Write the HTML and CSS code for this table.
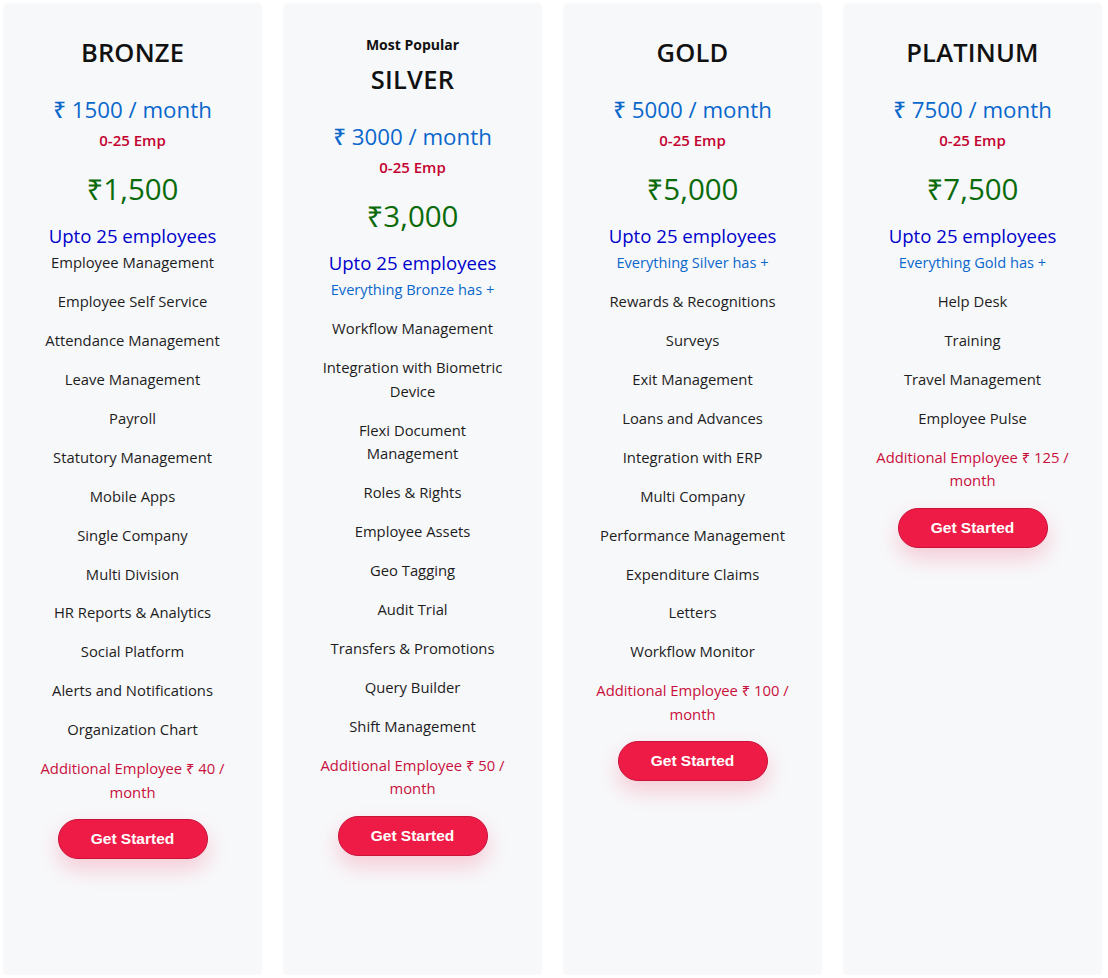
FILE: index.html
```html
<!DOCTYPE html>
<html lang="en">
<head>
<meta charset="utf-8">
<title>Pricing</title>
<link rel="stylesheet" href="styles.css">
</head>
<body>
<div class="pricing">
  <div class="card">
    <h2 class="plan">BRONZE</h2>
    <div class="price">₹ 1500 / month</div>
    <div class="emp">0-25 Emp</div>
    <div class="amount">₹1,500</div>
    <div class="upto">Upto 25 employees</div>
    <ul class="features">
      <li>Employee Management</li>
      <li>Employee Self Service</li>
      <li>Attendance Management</li>
      <li>Leave Management</li>
      <li>Payroll</li>
      <li>Statutory Management</li>
      <li>Mobile Apps</li>
      <li>Single Company</li>
      <li>Multi Division</li>
      <li>HR Reports &amp; Analytics</li>
      <li>Social Platform</li>
      <li>Alerts and Notifications</li>
      <li>Organization Chart</li>
      <li class="extra">Additional Employee ₹ 40 / month</li>
    </ul>
    <button class="btn">Get Started</button>
  </div>
  <div class="card">
    <div class="badge">Most Popular</div>
    <h2 class="plan">SILVER</h2>
    <div class="price">₹ 3000 / month</div>
    <div class="emp">0-25 Emp</div>
    <div class="amount">₹3,000</div>
    <div class="upto">Upto 25 employees</div>
    <ul class="features">
      <li class="inherit">Everything Bronze has +</li>
      <li>Workflow Management</li>
      <li>Integration with Biometric Device</li>
      <li>Flexi Document Management</li>
      <li>Roles &amp; Rights</li>
      <li>Employee Assets</li>
      <li>Geo Tagging</li>
      <li>Audit Trial</li>
      <li>Transfers &amp; Promotions</li>
      <li>Query Builder</li>
      <li>Shift Management</li>
      <li class="extra">Additional Employee ₹ 50 / month</li>
    </ul>
    <button class="btn">Get Started</button>
  </div>
  <div class="card">
    <h2 class="plan">GOLD</h2>
    <div class="price">₹ 5000 / month</div>
    <div class="emp">0-25 Emp</div>
    <div class="amount">₹5,000</div>
    <div class="upto">Upto 25 employees</div>
    <ul class="features">
      <li class="inherit">Everything Silver has +</li>
      <li>Rewards &amp; Recognitions</li>
      <li>Surveys</li>
      <li>Exit Management</li>
      <li>Loans and Advances</li>
      <li>Integration with ERP</li>
      <li>Multi Company</li>
      <li>Performance Management</li>
      <li>Expenditure Claims</li>
      <li>Letters</li>
      <li>Workflow Monitor</li>
      <li class="extra">Additional Employee ₹ 100 / month</li>
    </ul>
    <button class="btn">Get Started</button>
  </div>
  <div class="card">
    <h2 class="plan">PLATINUM</h2>
    <div class="price">₹ 7500 / month</div>
    <div class="emp">0-25 Emp</div>
    <div class="amount">₹7,500</div>
    <div class="upto">Upto 25 employees</div>
    <ul class="features">
      <li class="inherit">Everything Gold has +</li>
      <li>Help Desk</li>
      <li>Training</li>
      <li>Travel Management</li>
      <li>Employee Pulse</li>
      <li class="extra">Additional Employee ₹ 125 / month</li>
    </ul>
    <button class="btn">Get Started</button>
  </div>
</div>
</body>
</html>
```
FILE: styles.css
```css
html, body {
  margin: 0;
  padding: 0;
  background: #ffffff;
}
body {
  font-family: "Open Sans", "Noto Sans", sans-serif;
  color: #212529;
}
.pricing {
  display: grid;
  grid-template-columns: repeat(4, 257px);
  column-gap: 23px;
  padding: 4px 0 0 4px;
}
.card {
  box-sizing: border-box;
  min-height: 971px;
  background: #f7f8fa;
  border-radius: 4px;
  box-shadow: 0 0 3px rgba(0, 0, 0, 0.06);
  padding: 31px 30px 20px;
  text-align: center;
  display: flex;
  flex-direction: column;
  align-items: center;
}
.badge {
  font-size: 14px;
  font-weight: 700;
  line-height: 20px;
  color: #111;
  margin-bottom: 7px;
}
.plan {
  margin: 0;
  font-size: 25.5px;
  font-weight: 600;
  line-height: 34px;
  color: #111;
  letter-spacing: 0.2px;
}
.price {
  margin-top: 26px;
  font-size: 22.3px;
  font-weight: 500;
  line-height: 29px;
  color: #0a67cc;
}
.emp {
  margin-top: 6px;
  font-size: 15px;
  font-weight: 600;
  line-height: 20px;
  color: #c4002f;
}
.amount {
  margin-top: 20px;
  font-size: 29.5px;
  line-height: 38px;
  color: #0b6b0b;
}
.upto {
  margin-top: 16px;
  font-size: 18.6px;
  line-height: 24px;
  color: #0000cc;
}
.features {
  list-style: none;
  margin: 3px 0 0;
  padding: 0;
  width: 100%;
}
.features li {
  font-size: 14.8px;
  line-height: 23.8px;
  margin-bottom: 15.15px;
  color: #1d1d1d;
}
.features li.inherit {
  font-size: 14.6px;
  color: #0a67cc;
}
.features li.extra {
  color: #c8103c;
  line-height: 23.5px;
}
.btn {
  width: 150px;
  height: 40px;
  border: 1px solid #c9123a;
  border-radius: 20px;
  background: #ee1b46;
  color: #ffffff;
  font-family: "Liberation Sans", Arial, sans-serif;
  font-weight: 700;
  font-size: 15.5px;
  box-shadow: 0 10px 22px rgba(238, 27, 70, 0.2);
  cursor: pointer;
}
```
